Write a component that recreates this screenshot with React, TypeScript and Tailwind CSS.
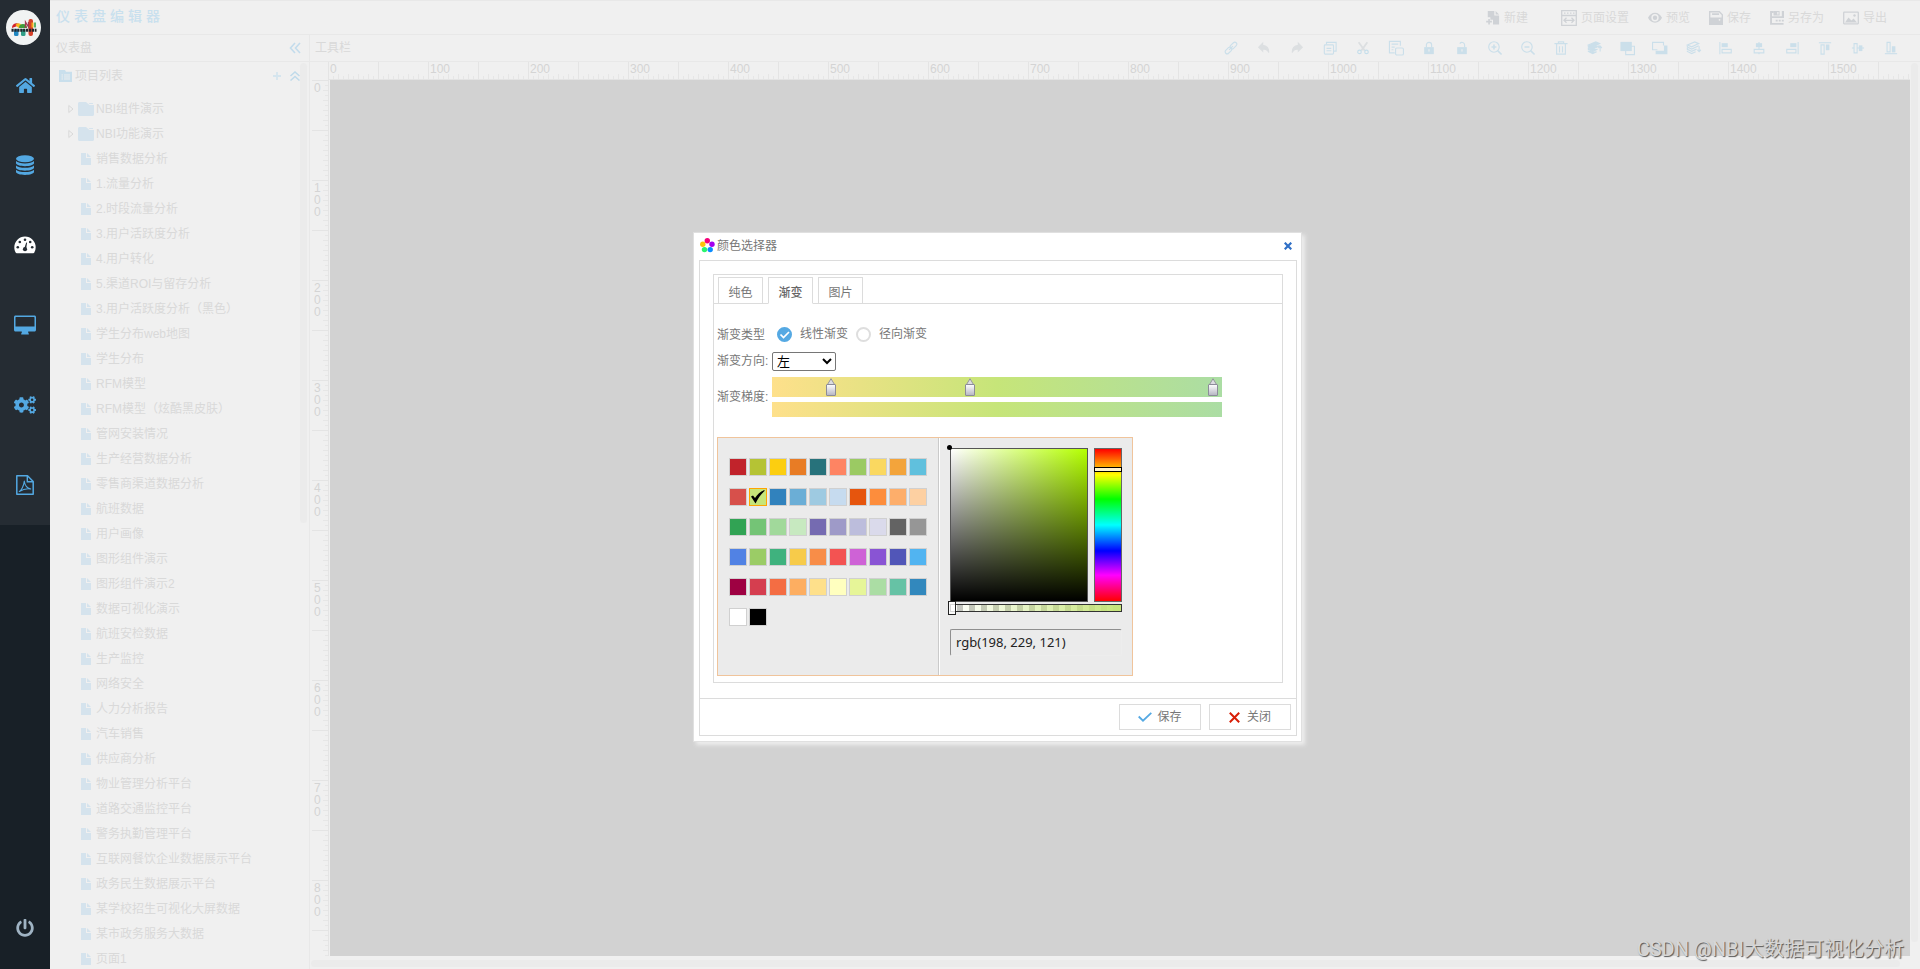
import React, { useState } from "react";
import { FaCogs, FaHome, FaPowerOff } from "react-icons/fa";

const folders = ["NBI组件演示", "NBI功能演示"];

const pages = [
  "销售数据分析", "1.流量分析", "2.时段流量分析", "3.用户活跃度分析", "4.用户转化",
  "5.渠道ROI与留存分析", "3.用户活跃度分析（黑色）", "学生分布web地图", "学生分布", "RFM模型",
  "RFM模型（炫酷黑皮肤）", "管网安装情况", "生产经营数据分析", "零售商渠道数据分析", "航班数据",
  "用户画像", "图形组件演示", "图形组件演示2", "数据可视化演示", "航班安检数据", "生产监控",
  "网络安全", "人力分析报告", "汽车销售", "供应商分析", "物业管理分析平台", "道路交通监控平台",
  "警务执勤管理平台", "互联网餐饮企业数据展示平台", "政务民生数据展示平台", "某学校招生可视化大屏数据",
  "某市政务服务大数据", "页面1",
];

const palette = [
  ["#c1232b", "#b5c334", "#fcce10", "#e87c25", "#27727b", "#fe8463", "#9bca63", "#fad860", "#f3a43b", "#60c0dd"],
  ["#d7504b", "#c6e579", "#3182bd", "#6baed6", "#9ecae1", "#c6dbef", "#e6550d", "#fd8d3c", "#fdae6b", "#fdd0a2"],
  ["#31a354", "#74c476", "#a1d99b", "#c7e9c0", "#756bb1", "#9e9ac8", "#bcbddc", "#dadaeb", "#636363", "#969696"],
  ["#5182e4", "#9bcc66", "#3fb27e", "#f7cb4a", "#f88d48", "#f35352", "#ce62d6", "#8954d4", "#5156b8", "#51b4f1"],
  ["#9e0142", "#d53e4f", "#f46d43", "#fdae61", "#fee08b", "#ffffbf", "#e6f598", "#abdda4", "#66c2a5", "#3288bd"],
  ["#ffffff", "#000000"],
];

const hundreds = Array.from({ length: 16 }, (_, i) => i * 100);

/* ---------- side bar ---------- */

function Logo() {
  return (
    <svg viewBox="0 0 35 35" className="size-[35px]" aria-hidden="true">
      <circle cx="17.5" cy="17.5" r="17.5" fill="#f1f3f3" />
      <path d="M6 18a4.500 4.500 0 0 1 8-3z" fill="#d3222a" />
      <path d="M9.500 15a3.500 3.500 0 0 1 6 0l-3 3z" fill="#f5b81c" />
      <path d="M13 18a4 4 0 0 1 8 0z" fill="#3f9b3c" />
      <rect x="8" y="19" width="4.500" height="7" rx="1.500" fill="#1f86c0" />
      <rect x="15" y="19" width="4.500" height="7" rx="1.500" fill="#2f9e86" />
      <rect x="22.500" y="9" width="4.500" height="17" rx="2" fill="#d5402a" />
      <path d="M19.500 18v-6l3 5v-5" stroke="#a13a52" strokeWidth="1.300" fill="none" />
      <path d="M25.500 12.500v5h2v-5z" fill="#f2a81d" />
      <path d="M29 12.500v5" stroke="#35a24a" strokeWidth="1.600" />
      <path d="M5.500 20.300h25" stroke="#23262b" strokeWidth="3" strokeDasharray="2.200 .7" />
    </svg>
  );
}

function DatabaseIcon() {
  return (
    <svg viewBox="0 0 18 20" className="h-5 w-[18px]" fill="currentColor" aria-hidden="true">
      <ellipse cx="9" cy="3.700" rx="9" ry="3.500" />
      <path d="M0 6c1.500 1.700 5 2.400 9 2.400S16.500 7.700 18 6v2.300c0 1.500-4 2.900-9 2.900S0 9.800 0 8.300z" />
      <path d="M0 10.400c1.500 1.700 5 2.300 9 2.300s7.500-.6 9-2.300v2.400c0 1.500-4 2.900-9 2.900s-9-1.400-9-2.900z" />
      <path d="M0 14.800c1.500 1.700 5 2.300 9 2.300s7.500-.6 9-2.300v2.300c0 1.500-4 2.900-9 2.900s-9-1.400-9-2.900z" />
    </svg>
  );
}

function GaugeIcon() {
  return (
    <svg viewBox="0 0 22 18" className="h-[18px] w-[22px]" aria-hidden="true">
      <path d="M11 .5A10.700 10.700 0 0 0 .3 11.200c0 2 .5 4 1.500 5.600.2.300.5.500.9.500h16.600c.4 0 .7-.2.900-.5a11 11 0 0 0 1.500-5.600A10.700 10.700 0 0 0 11 .5z" fill="#fff" />
      <g fill="#252c33">
        <circle cx="11" cy="3.800" r="1.300" />
        <circle cx="5.800" cy="6" r="1.300" />
        <circle cx="16.200" cy="6" r="1.300" />
        <circle cx="3.800" cy="11.200" r="1.300" />
        <circle cx="18.200" cy="11.200" r="1.300" />
        <circle cx="11" cy="13.200" r="2.100" />
        <path d="M10.300 12.500l1.900-6 .9.200-1 6.300z" />
      </g>
    </svg>
  );
}

function MonitorIcon() {
  return (
    <svg viewBox="0 0 22 20" className="h-5 w-[22px]" fill="currentColor" aria-hidden="true">
      <path fillRule="evenodd" d="M1.500.5h19c.8 0 1.500.7 1.500 1.500v13c0 .8-.7 1.500-1.500 1.500h-6.300v1c.1.900.8 1 .8 1.500 0 .3-.2.500-.5.500h-7c-.3 0-.5-.2-.5-.5 0-.5.700-.6.800-1.500v-1H1.500C.7 16.500 0 15.800 0 15V2C0 1.200.7.500 1.500.5zm.6 1.400c-.3 0-.6.200-.6.600v9h19v-9c0-.4-.3-.6-.6-.6z" />
    </svg>
  );
}

function PdfIcon() {
  return (
    <svg viewBox="0 0 18 20" className="h-5 w-[18px]" fill="none" stroke="currentColor" aria-hidden="true">
      <path d="M1 .8h10.500l5.700 5.700v12.700H.8V.8z" strokeWidth="1.500" strokeLinejoin="round" />
      <path d="M11.300 1v5.700h5.700" strokeWidth="1.400" />
      <path d="M3.300 16.500c2-1 4.500-5.500 5-10.500.4 4 2 7 6.500 8-4-.8-7.500 0-11.500 2.500z" strokeWidth="1.100" strokeLinejoin="round" />
    </svg>
  );
}

function SideBar() {
  const items = [
    { label: "首页", icon: <FaHome className="size-[19px]" /> },
    { label: "数据源", icon: <DatabaseIcon /> },
    { label: "仪表盘", icon: <GaugeIcon /> },
    { label: "大屏", icon: <MonitorIcon /> },
    { label: "设置", icon: <FaCogs className="size-[22px]" /> },
    { label: "报告", icon: <PdfIcon /> },
  ];
  return (
    <nav className="flex w-[50px] shrink-0 flex-col bg-[#182027]">
      <div className="bg-[#252c33]">
        <div className="flex h-[45px] items-end pl-1.5">
          <Logo />
        </div>
        {items.map((it) => (
          <a key={it.label} href="#" aria-label={it.label} className="flex h-20 items-center justify-center text-[#53a8e2]">
            {it.icon}
          </a>
        ))}
      </div>
      <button aria-label="退出" className="mt-auto mb-8 flex justify-center text-[#9fb3c3]">
        <FaPowerOff className="size-[18px]" />
      </button>
    </nav>
  );
}

/* ---------- header ---------- */

function HeaderButton({ label, children, wide = false }: { label: string; children: React.ReactNode; wide?: boolean }) {
  return (
    <button className="flex items-center gap-1">
      <svg viewBox="0 0 16 16" className={"text-[#cfd2d6] " + (wide ? "size-4" : "size-3.5")} fill="none" stroke="currentColor" strokeWidth="1.300" aria-hidden="true">
        {children}
      </svg>
      {label}
    </button>
  );
}

function Header() {
  return (
    <header className="flex h-[35px] shrink-0 items-center justify-between border-y border-[#e8e8e8] pr-[33px] pl-1.5">
      <h1 className="pb-1 text-sm font-medium tracking-[4px] text-[#c9e0ee]">仪表盘编辑器</h1>
      <div className="flex gap-[19px] pt-px text-[#d9d9d9]">
        <div className="pr-3.5">
          <HeaderButton label="新建">
            <path d="M2 0h7.500v5h5.500v10.500H8v-5.500H5V7H2z" fill="currentColor" stroke="none" />
            <path d="M11 0l4 4h-4z" fill="currentColor" stroke="none" />
            <path d="M3.500 9v6.500M.2 12.200h6.500" strokeWidth="1.900" />
          </HeaderButton>
        </div>
        <HeaderButton label="页面设置" wide>
          <path d="M.7.700h14.600v14.600H.7zM.7 5.500h14.600" />
          <path d="M3 3.200h1.500M6 3.200h1.500M9 3.200h1.500M12 3.200h1.500M3 10.300h10M5.500 7.800L3 10.300l2.500 2.500M10.500 7.800l2.500 2.500-2.500 2.500" />
        </HeaderButton>
        <HeaderButton label="预览">
          <path fillRule="evenodd" d="M8 2c3.600 0 6.400 2.400 8 5.700-1.600 3.300-4.400 5.700-8 5.700S1.600 11 0 7.700C1.600 4.400 4.400 2 8 2zm0 1.500a4.200 4.200 0 1 0 0 8.400 4.200 4.200 0 0 0 0-8.400z" fill="currentColor" stroke="none" />
          <circle cx="8" cy="7.700" r="2.500" fill="currentColor" stroke="none" />
        </HeaderButton>
        <HeaderButton label="保存">
          <path d="M.8.800h11l3.400 3.400v11H.8z" strokeWidth="1.600" />
          <path d="M3.500 2.500h8v2h-8zM1 7.500h14V15H1z" fill="currentColor" stroke="none" />
          <circle cx="12" cy="10" r="1" fill="#f0f0f0" stroke="none" />
        </HeaderButton>
        <HeaderButton label="另存为">
          <path d="M15.500 14.700H1.200V1.200h3" strokeWidth="2.200" />
          <path d="M4 0h7v5H4zM13.500 0H16v8H2V6h11.500z" fill="currentColor" stroke="none" />
          <path d="M9 1v3" stroke="#f0f0f0" strokeWidth="1.500" />
          <path d="M6.500 11h9.500" strokeWidth="2.200" strokeDasharray="2.200 1.300" />
        </HeaderButton>
        <HeaderButton label="导出" wide>
          <rect x=".7" y="2.200" width="14.600" height="11.600" rx=".5" />
          <path d="M2 12.500l3.500-5 3 3 2-2 3.500 4z" fill="currentColor" stroke="none" />
          <circle cx="11.500" cy="5.500" r="1.200" fill="currentColor" stroke="none" />
        </HeaderButton>
      </div>
    </header>
  );
}

/* ---------- tool bar ---------- */

const stack = (
  <>
    <path d="M1.500 4.500L10 1l4.500 2L6.500 6.700z" />
    <path d="M1.500 5v2L6.500 9.200 14.500 5.500M1.500 8v1.500L6.500 11.800 12 9.300M1.500 11v1L6.500 14.300 11 12.200" strokeWidth="1.300" />
  </>
);

const tools: { name: string; gray?: boolean; art: React.ReactNode }[] = [
  { name: "链接", art: <g transform="rotate(-45 8 8)"><rect x="-.5" y="5.700" width="9" height="4.600" rx="2.300" /><rect x="7.500" y="5.700" width="9" height="4.600" rx="2.300" /><path d="M5 8h6" /></g> },
  { name: "撤销", gray: true, art: <path d="M6.500 2.500L2 7l4.500 4.500V9c3.500 0 5.500 1 7 4 0-4.500-2.500-7.500-7-8z" fill="currentColor" /> },
  { name: "重做", gray: true, art: <path d="M9.500 2.500L14 7l-4.500 4.500V9c-3.500 0-5.500 1-7 4 0-4.500 2.500-7.500 7-8z" fill="currentColor" /> },
  { name: "复制", art: <><path d="M4 4V1.600h11V11.500h-2.500" /><rect x="1.500" y="4.500" width="10.500" height="10.500" rx="1" /><path d="M4 8.500h5.500M4 11.200h5.500" /></> },
  { name: "剪切", gray: true, art: <><path d="M3 1.500l7 9.500M13 1.500L6 11" strokeWidth="2" /><circle cx="4" cy="12.500" r="2" stroke="#c5deeb" /><circle cx="12" cy="12.500" r="2" stroke="#c5deeb" /></> },
  { name: "粘贴", art: <><path d="M6.500 13.500H.5V.5H13v5M3 3.500h7.500M3 7h3.500M3 10h2" /><rect x="7.500" y="8" width="9" height="8" rx="1.500" /></> },
  { name: "锁定", art: <><path d="M2.500 7h11v8h-11z" fill="currentColor" stroke="none" /><path d="M5 7V4.500a3 3 0 0 1 6 0V7" /><path d="M8 9.500v2.500" stroke="#f0f0f0" /></> },
  { name: "解锁", art: <><path d="M2.500 7h11v8h-11z" fill="currentColor" stroke="none" /><path d="M11 7V4.500a3 3 0 0 0-5.500-1.500" /><path d="M8 9.500v2.500" stroke="#f0f0f0" /></> },
  { name: "放大", art: <><circle cx="6.800" cy="6.800" r="6" /><path d="M11 11l4.500 4.500M4 6.800h5.600M6.800 4v5.600" strokeWidth="1.800" /></> },
  { name: "缩小", art: <><circle cx="6.800" cy="6.800" r="6" /><path d="M11 11l4.500 4.500M4 6.800h5.600" strokeWidth="1.800" /></> },
  { name: "删除", art: <path d="M.5 3h15M5 3V1h6v2M3 3.500V15h10V3.500M6.300 6v7M9.700 6v7" /> },
  { name: "上移", art: <><g fill="currentColor">{stack}</g><path d="M15 12V6M13 8l2-2.200L17 8" /></> },
  { name: "置顶", art: <><path d="M12.500 6h4v9.500H6.500V11" /><path d="M.5 1h13v10.500H.5z" fill="currentColor" stroke="none" /></> },
  { name: "置底", art: <><path d="M5 10H-.5V1.500H12V5" /><path d="M12.500 5H16.500v10H3V11h9.500z" fill="currentColor" stroke="none" /></> },
  { name: "下移", art: <>{stack}<path d="M15 6v6M13 10l2 2.200 2-2.200" /></> },
  { name: "左对齐", art: <><path d="M1 1v14" /><path d="M3 2.500h7v4.500H3z" fill="currentColor" stroke="none" /><path d="M3.500 9.500H14v4H3.500z" /></> },
  { name: "水平居中", art: <><path d="M8 1v14" /><path d="M4.500 2.500h7v4.500h-7z" fill="currentColor" stroke="none" /><path d="M2.500 9.500h11v4h-11z" fill="#f0f0f0" /></> },
  { name: "右对齐", art: <><path d="M15 1v14" /><path d="M6 2.500h7v4.500H6z" fill="currentColor" stroke="none" /><path d="M2 9.500h10.500v4H2z" /></> },
  { name: "顶对齐", art: <><path d="M1 2h14" /><path d="M9 4h4v6.500H9z" fill="currentColor" stroke="none" /><path d="M3.500 4.500h3.500V15H3.500z" /></> },
  { name: "垂直居中", art: <><path d="M1 8h14" /><path d="M9 5h4v6.500H9z" fill="currentColor" stroke="none" /><path d="M3.500 3h3.500v10.500H3.500z" fill="#f0f0f0" /></> },
  { name: "底对齐", art: <><path d="M1 14.500h14" /><path d="M9 6h4v7H9z" fill="currentColor" stroke="none" /><path d="M3.500 1.500h3.500v11H3.500z" /></> },
];

function ToolBar() {
  return (
    <div className="flex h-[27px] shrink-0 items-center justify-between border-b border-[#e8e8e8] pr-[13px] pl-[5px] text-[#d9d9d9]">
      <span>工具栏</span>
      <div className="flex">
        {tools.map((t) => (
          <button key={t.name} aria-label={t.name} className={"flex w-[33px] justify-center " + (t.gray ? "text-[#dcdfe1]" : "text-[#cbdfea]")}>
            <svg viewBox="0 0 16 16" className="size-3.5 overflow-visible" fill="none" stroke="currentColor" strokeWidth="1.300" aria-hidden="true">
              {t.art}
            </svg>
          </button>
        ))}
      </div>
    </div>
  );
}

/* ---------- project tree ---------- */

function ProjectPanel() {
  return (
    <aside className="relative flex w-[260px] shrink-0 flex-col border-r border-[#e8e8e8] text-[#d9d9d9]">
      <div className="flex h-[27px] shrink-0 items-center justify-between border-b border-[#e8e8e8] pr-2 pl-1.5">
        <span>仪表盘</span>
        <button aria-label="收起面板" className="text-[#c3dcec]">
          <svg viewBox="0 0 12 12" className="size-3" fill="none" stroke="currentColor" strokeWidth="1.600" aria-hidden="true">
            <path d="M6 1L1.500 6 6 11M11 1L6.500 6 11 11" />
          </svg>
        </button>
      </div>
      <div className="min-h-0 flex-1 overflow-hidden">
        <div className="flex h-7 items-center px-[9px]">
          <svg viewBox="0 0 13 12" className="mr-[3px] h-3 w-[13px]" aria-hidden="true">
            <path d="M0 0h6l1 1.800h6V12H0z" fill="#c9dfec" />
            <path d="M2.500 5h1.500M5 5h6M2.500 7h1.500M5 7h6M2.500 9h1.500M5 9h6" stroke="#f0f0f0" strokeWidth=".9" />
          </svg>
          <span>项目列表</span>
          <button aria-label="添加" className="mr-2 ml-auto text-[#d5e5ee]">
            <svg viewBox="0 0 10 10" className="size-2.5" fill="none" stroke="currentColor" strokeWidth="1.800" aria-hidden="true">
              <path d="M5 1v8M1 5h8" />
            </svg>
          </button>
          <button aria-label="全部折叠" className="text-[#bfdaea]">
            <svg viewBox="0 0 10 10" className="size-2.5" fill="none" stroke="currentColor" strokeWidth="1.500" aria-hidden="true">
              <path d="M.5 5L5 1l4.500 4M.5 9.500L5 5.500l4.500 4" />
            </svg>
          </button>
        </div>
        <ul className="pt-1.5">
          {folders.map((f) => (
            <li key={f} className="flex h-[25px] items-center pl-[18px]">
              <svg viewBox="0 0 6 8" className="mr-1 h-2 w-1.5 overflow-visible" fill="none" stroke="#d9d9d9" aria-hidden="true">
                <path d="M.8.500v7L5 4z" />
              </svg>
              <svg viewBox="0 0 16 14" className="mr-0.5 h-3.5 w-4" fill="#d5e3ed" aria-hidden="true">
                <path d="M1.500 0H8l3.500 3H16v9.500c0 .8-.7 1.500-1.500 1.500h-13C.7 14 0 13.300 0 12.500v-11C0 .7.7 0 1.500 0z" />
                <path d="M10.500 1h4.500v1h-3.500z" />
              </svg>
              <span>{f}</span>
            </li>
          ))}
          {pages.map((p) => (
            <li key={p} className="flex h-[25px] items-center gap-[5px] pl-[31px]">
              <svg viewBox="0 0 10 12" className="h-3 w-2.5" fill="#d5e3ed" aria-hidden="true">
                <path d="M0 0h5v5h5v7H0z" />
                <path d="M6 0l4 4H6z" />
              </svg>
              <span className="whitespace-nowrap">{p}</span>
            </li>
          ))}
        </ul>
      </div>
      <div className="absolute top-7 right-0.5 h-[460px] w-[7px] rounded-full bg-[#ebebeb]" />
    </aside>
  );
}

/* ---------- canvas with rulers ---------- */

function HorizontalRuler() {
  return (
    <div className="relative ml-[17px] flex h-[18px] shrink-0 overflow-hidden border-b border-[#e4e4e4]">
      <svg className="absolute inset-0 size-full" aria-hidden="true">
        <defs>
          <pattern id="hTicks" width="50" height="18" patternUnits="userSpaceOnUse">
            <path d="M.5 0v18" stroke="#e4e4e4" />
            <path d="M10.500 12v6M20.500 12v6M30.500 12v6M40.500 12v6" stroke="#e6e6e6" />
            <path d="M5.500 14v4M15.500 14v4M25.500 14v4M35.500 14v4M45.500 14v4" stroke="#e6e6e6" />
          </pattern>
        </defs>
        <rect width="100%" height="100%" fill="url(#hTicks)" />
      </svg>
      {hundreds.map((n) => (
        <span key={n} className="relative w-[100px] shrink-0 pl-0.5 leading-[14px]">{n}</span>
      ))}
    </div>
  );
}

function VerticalRuler() {
  return (
    <div className="relative flex w-[18px] shrink-0 flex-col overflow-hidden border-r border-[#e4e4e4]">
      <svg className="absolute inset-0 size-full" aria-hidden="true">
        <defs>
          <pattern id="vTicks" width="18" height="50" patternUnits="userSpaceOnUse">
            <path d="M1 .5h17" stroke="#e4e4e4" />
            <path d="M12 10.500h6M12 20.500h6M12 30.500h6M12 40.500h6" stroke="#e6e6e6" />
            <path d="M14 5.500h4M14 15.500h4M14 25.500h4M14 35.500h4M14 45.500h4" stroke="#e6e6e6" />
          </pattern>
        </defs>
        <rect width="100%" height="100%" fill="url(#vTicks)" />
      </svg>
      {hundreds.slice(0, 9).map((n) => (
        <span key={n} className="relative h-[100px] w-2.5 shrink-0 pt-0.5 pl-[3px] leading-3 wrap-anywhere">{n}</span>
      ))}
    </div>
  );
}

function Workspace() {
  return (
    <main className="flex min-w-0 flex-1 flex-col">
      <ToolBar />
      <div className="flex min-h-0 flex-1">
        <div className="flex min-w-0 flex-1 flex-col pl-px text-[#d4d4d4]">
          <HorizontalRuler />
          <div className="flex min-h-0 flex-1">
            <VerticalRuler />
            <div className="ml-px flex-1 bg-[#d2d2d2]" />
          </div>
          <div className="h-[13px] shrink-0 pt-1 pr-2.5">
            <div className="h-[7px] rounded-full bg-[#ebebeb]" />
          </div>
        </div>
        <div className="w-2.5 shrink-0 pt-px pr-0.5 pb-[27px] pl-px">
          <div className="h-full rounded-full bg-[#ebebeb]" />
        </div>
      </div>
    </main>
  );
}

/* ---------- colour dialog ---------- */

function RadioOption({ label, checked, onChange }: { label: string; checked: boolean; onChange: () => void }) {
  return (
    <label className="relative flex items-center gap-2">
      <input
        type="radio"
        name="gradientType"
        checked={checked}
        onChange={onChange}
        className="size-[15px] appearance-none rounded-full border-2 border-[#dedede] bg-white checked:border-[#55a9e3] checked:bg-[#55a9e3]"
      />
      {checked && (
        <svg viewBox="0 0 15 15" className="absolute left-0 size-[15px]" fill="none" stroke="#fff" strokeWidth="1.700" aria-hidden="true">
          <path d="M3.500 7.500l3 3 5.500-5.500" />
        </svg>
      )}
      <span>{label}</span>
    </label>
  );
}

function StopHandle({ at, label }: { at: number; label: string }) {
  return (
    <div className="absolute top-px -ml-[5px] h-[18px] w-2.5" style={{ left: at + "%" }}>
      <svg viewBox="0 0 10 18" className="h-[18px] w-2.5" aria-hidden="true">
        <defs>
          <linearGradient id="stopFill" x1="0" y1="0" x2="0" y2="1">
            <stop offset="0" stopColor="#fff" />
            <stop offset="1" stopColor="#b5b5c2" />
          </linearGradient>
        </defs>
        <path d="M5 .7L8.500 6.500h-7z" fill="#dcdce0" stroke="#96969f" />
        <rect x=".5" y="6.500" width="9" height="11" rx=".5" fill="url(#stopFill)" stroke="#8c8c99" />
      </svg>
      <input type="range" aria-label={label} defaultValue={at} className="absolute inset-0 size-full opacity-0" />
    </div>
  );
}

function Swatches() {
  return (
    <div className="flex w-[221px] flex-col gap-3 border-r border-[#cacaca] pt-5 pl-[11px]">
      {palette.map((row, i) => (
        <div key={i} className="flex gap-0.5">
          {row.map((c) => (
            <button
              key={c}
              aria-label={c}
              className={"size-[18px] border " + (c === "#c6e579" ? "border-[#ffa500]" : "border-[#d0d0d0]")}
              style={{ backgroundColor: c }}
            >
              {c === "#c6e579" && (
                <svg viewBox="0 0 16 16" className="size-4" aria-hidden="true">
                  <path d="M1 7.500l2-1 2 2.500C7.500 5 10.500 2.500 14.500 1v1C11 5 8 9.500 5.500 14.500z" fill="#000" />
                </svg>
              )}
            </button>
          ))}
        </div>
      ))}
    </div>
  );
}

function Picker() {
  return (
    <div className="flex-1 border-l border-white px-2.5 pt-2.5">
      <div className="flex gap-1.5">
        <div className="relative h-[154px] w-[138px] border border-[#555] bg-[linear-gradient(to_top,#000,transparent),linear-gradient(to_right,#fff,#b4ff00)]">
          <div className="absolute -top-1 -left-1 size-[5px] rounded-full bg-black" />
        </div>
        <div className="relative h-[154px] w-7 border border-[#666] bg-[linear-gradient(#f00,#ff0_17%,#0f0_33%,#0ff_50%,#00f_67%,#f0f_83%,#f00)]">
          <div className="absolute top-[18px] -right-px -left-px h-[5px] border border-black bg-white/80" />
          <input type="range" aria-label="色相" className="absolute inset-0 size-full opacity-0" />
        </div>
      </div>
      <div className="relative mt-0.5 h-2 border border-[#333] bg-[linear-gradient(to_right,#c6e57900,#c6e579),repeating-linear-gradient(to_right,#fff_0_6px,#c4c4c4_6px_12px)]">
        <div className="absolute -top-1 -left-[3px] h-3.5 w-2 border border-[#222] bg-white/80" />
        <input type="range" aria-label="透明度" className="absolute inset-0 size-full opacity-0" />
      </div>
      <input
        aria-label="颜色值"
        defaultValue="rgb(198, 229, 121)"
        className="mt-[17px] h-[27px] w-full rounded-xs border border-t-[#8f8f8f] border-r-[#ededed] border-b-[#ededed] border-l-[#8f8f8f] bg-transparent px-[5px] pb-0.5 font-['Noto_Sans'] text-[13px] text-[#222]"
      />
    </div>
  );
}

function ColorDialog() {
  const [kind, setKind] = useState("linear");
  const tabs = ["纯色", "渐变", "图片"];
  return (
    <section
      role="dialog"
      aria-label="颜色选择器"
      className="absolute top-[232px] left-[693px] w-[609px] border border-[#e0e0e0] bg-white pr-1 pb-[5px] pl-[5px] text-[#777] shadow-[3px_3px_4px_#eee]"
    >
      <div className="flex h-[27px] items-center justify-between pr-[5px] pb-0.5 pl-px">
        <div className="flex items-center gap-0.5">
          <svg viewBox="0 0 15 15" className="size-[15px]" aria-hidden="true">
            <circle cx="7.300" cy="2.800" r="2.700" fill="#f5007a" />
            <circle cx="12" cy="6.300" r="2.700" fill="#a300ef" />
            <circle cx="10.200" cy="11.600" r="2.700" fill="#0a8cff" />
            <circle cx="4.500" cy="11.600" r="2.700" fill="#2cf56e" />
            <circle cx="2.800" cy="6.300" r="2.700" fill="#ffc20a" />
          </svg>
          <h2>颜色选择器</h2>
        </div>
        <button aria-label="关闭窗口">
          <svg viewBox="0 0 8 8" className="size-2" fill="none" stroke="#2f6fc6" strokeWidth="2.200" aria-hidden="true">
            <path d="M.7.700l6.600 6.600M7.300.700L.7 7.300" />
          </svg>
        </button>
      </div>

      <div className="border border-[#dcdcdc]">
        <div className="px-[13px] pt-[13px] pb-[15px]">
          <div className="border border-[#dcdcdc]">
            <div role="tablist" className="flex h-[29px] gap-[5px] border-b border-[#dcdcdc] pt-0.5 pl-1">
              {tabs.map((t, i) => (
                <button
                  key={t}
                  role="tab"
                  aria-selected={i === 1}
                  className={
                    "h-[27px] w-[45px] border border-[#dcdcdc] pt-1 " +
                    (i === 1 ? "border-b-white bg-white font-medium text-[#666]" : "")
                  }
                >
                  {t}
                </button>
              ))}
            </div>

            <div className="pt-5 pb-1.5 pl-[3px]">
              <div className="flex h-[22px] items-center">
                <span className="w-[60px]">渐变类型</span>
                <div className="flex gap-2 pb-0.5">
                  <RadioOption label="线性渐变" checked={kind === "linear"} onChange={() => setKind("linear")} />
                  <RadioOption label="径向渐变" checked={kind === "radial"} onChange={() => setKind("radial")} />
                </div>
              </div>
              <div className="mt-1 flex h-[22px] items-center">
                <label htmlFor="direction" className="w-[55px]">渐变方向:</label>
                <select id="direction" className="h-[19px] w-16 appearance-auto rounded-xs border border-[#767676] bg-white text-[13px] text-black">
                  <option>左</option>
                  <option>右</option>
                  <option>上</option>
                  <option>下</option>
                </select>
              </div>
              <div className="mt-[5px] flex items-center">
                <span className="w-[55px] shrink-0">渐变梯度:</span>
                <div className="w-[450px]">
                  <div className="relative h-5 bg-[linear-gradient(to_right,#fee08b,#c6e579_50%,#abdda4)]">
                    <StopHandle at={13} label="色标一" />
                    <StopHandle at={44} label="色标二" />
                    <StopHandle at={98} label="色标三" />
                  </div>
                  <div className="mt-[5px] h-[15px] bg-[linear-gradient(to_right,#fee08b,#c6e579_50%,#abdda4)]" />
                </div>
              </div>
              <div className="mt-5 flex h-[239px] w-[416px] border border-[#f0c49b] bg-[#ebebeb]">
                <Swatches />
                <Picker />
              </div>
            </div>
          </div>
        </div>

        <div className="flex h-[37px] items-center justify-end gap-2 border-t border-[#dcdcdc] pr-[5px]">
          <button className="flex h-[26px] w-[82px] items-center justify-center gap-[5px] border border-[#dcdcdc]">
            <svg viewBox="0 0 14 10" className="h-2.5 w-3.5" fill="none" stroke="#55a9e3" strokeWidth="1.800" aria-hidden="true">
              <path d="M.7 4.500l4.300 4.200L13.300.8" />
            </svg>
            保存
          </button>
          <button className="flex h-[26px] w-[82px] items-center justify-center gap-[7px] border border-[#dcdcdc]">
            <svg viewBox="0 0 11 11" className="size-[11px]" fill="none" stroke="#d81e06" strokeWidth="2" aria-hidden="true">
              <path d="M.8.800l9.400 9.400M10.200.800L.8 10.200" />
            </svg>
            关闭
          </button>
        </div>
      </div>
    </section>
  );
}

export default function App() {
  return (
    <div className="relative flex h-screen overflow-hidden bg-[#f0f0f0] font-['Liberation_Sans','Noto_Sans_CJK_SC',sans-serif] text-xs">
      <SideBar />
      <div className="flex min-w-0 flex-1 flex-col">
        <Header />
        <div className="flex min-h-0 flex-1">
          <ProjectPanel />
          <Workspace />
        </div>
      </div>
      <ColorDialog />
      <p className="absolute right-4 bottom-1.5 font-['Roboto','Noto_Sans_CJK_SC',sans-serif] text-xl leading-7 text-[#d6d6d6] [text-shadow:1px_1px_1px_#555]">
        CSDN @NBI大数据可视化分析
      </p>
    </div>
  );
}
